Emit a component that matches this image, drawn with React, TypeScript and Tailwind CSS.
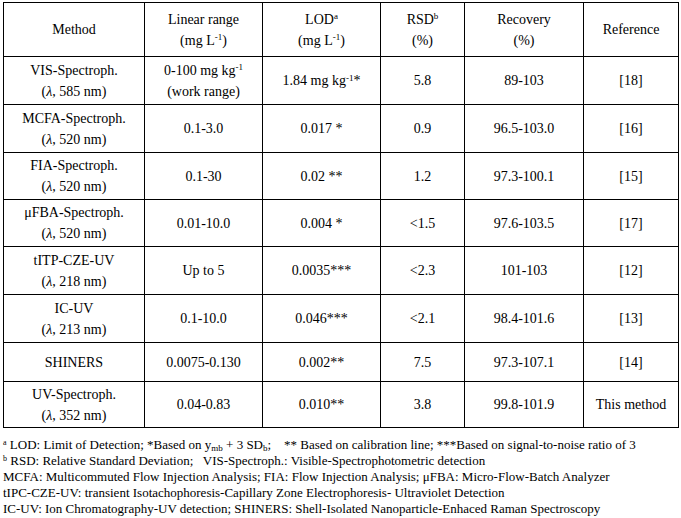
import React from "react";

type Row = { h: string; cells: React.ReactNode[] };

const L = () => <span className="italic">λ</span>;

const rows: Row[] = [
  {
    h: "h-[48px]",
    cells: [
      <>VIS-Spectroph.<br />(<L />, 585 nm)</>,
      <>0-100 mg kg<sup className="text-[9px]">-1</sup><br />(work range)</>,
      <>1.84 mg kg<sup className="text-[9px]">-1</sup>*</>,
      "5.8",
      "89-103",
      "[18]",
    ],
  },
  {
    h: "h-[48px]",
    cells: [<>MCFA-Spectroph.<br />(<L />, 520 nm)</>, "0.1-3.0", "0.017 *", "0.9", "96.5-103.0", "[16]"],
  },
  {
    h: "h-[47px]",
    cells: [<>FIA-Spectroph.<br />(<L />, 520 nm)</>, "0.1-30", "0.02 **", "1.2", "97.3-100.1", "[15]"],
  },
  {
    h: "h-[47px]",
    cells: [<>μFBA-Spectroph.<br />(<L />, 520 nm)</>, "0.01-10.0", "0.004 *", "<1.5", "97.6-103.5", "[17]"],
  },
  {
    h: "h-[48px]",
    cells: [<>tITP-CZE-UV<br />(<L />, 218 nm)</>, "Up to 5", "0.0035***", "<2.3", "101-103", "[12]"],
  },
  {
    h: "h-[48px]",
    cells: [<>IC-UV<br />(<L />, 213 nm)</>, "0.1-10.0", "0.046***", "<2.1", "98.4-101.6", "[13]"],
  },
  {
    h: "h-[39px]",
    cells: ["SHINERS", "0.0075-0.130", "0.002**", "7.5", "97.3-107.1", "[14]"],
  },
  {
    h: "h-[46px]",
    cells: [<>UV-Spectroph.<br />(<L />, 352 nm)</>, "0.04-0.83", "0.010**", "3.8", "99.8-101.9", "This method"],
  },
];

const header: React.ReactNode[] = [
  "Method",
  <>Linear range<br />(mg L<sup className="text-[9px]">-1</sup>)</>,
  <>LOD<sup className="text-[9px]">a</sup><br />(mg L<sup className="text-[9px]">-1</sup>)</>,
  <>RSD<sup className="text-[9px]">b</sup><br />(%)</>,
  <>Recovery<br />(%)</>,
  "Reference",
];

function Cell({ children, h }: { children: React.ReactNode; h: string }) {
  return (
    <div
      className={`${h} flex items-center justify-center border-r border-b border-black text-center leading-[21px]`}
    >
      <div>{children}</div>
    </div>
  );
}

export default function App() {
  return (
    <div
      className="w-[681px] h-[518px] bg-white text-black text-[14px] overflow-hidden"
      style={{ fontFamily: '"Liberation Serif", "Times New Roman", serif' }}
    >
      <div className="ml-[3px] mt-[2px] w-[676px] grid grid-cols-[141px_118px_118px_84px_119px_95px] border-l border-t border-black">
        {header.map((c, i) => (
          <Cell key={"h" + i} h="h-[54px]">
            {c}
          </Cell>
        ))}
        {rows.map((r, ri) =>
          r.cells.map((c, ci) => (
            <Cell key={ri + "-" + ci} h={r.h}>
              {c}
            </Cell>
          ))
        )}
      </div>
      <div className="ml-[3px] mt-[9px] text-[13px] leading-[16px]">
        <div>
          <sup className="text-[8px]">a</sup> LOD: Limit of Detection; *Based on y<sub className="text-[9px]">mb</sub> + 3 SD<sub className="text-[9px]">b</sub>;&nbsp;&nbsp;&nbsp; ** Based on calibration line; ***Based on signal-to-noise ratio of 3
        </div>
        <div>
          <sup className="text-[8px]">b</sup> RSD: Relative Standard Deviation;&nbsp;&nbsp; VIS-Spectroph.: Visible-Spectrophotometric detection
        </div>
        <div>MCFA: Multicommuted Flow Injection Analysis; FIA: Flow Injection Analysis; μFBA: Micro-Flow-Batch Analyzer</div>
        <div>tIPC-CZE-UV: transient Isotachophoresis-Capillary Zone Electrophoresis- Ultraviolet Detection</div>
        <div>IC-UV: Ion Chromatography-UV detection; SHINERS: Shell-Isolated Nanoparticle-Enhaced Raman Spectroscopy</div>
      </div>
    </div>
  );
}
